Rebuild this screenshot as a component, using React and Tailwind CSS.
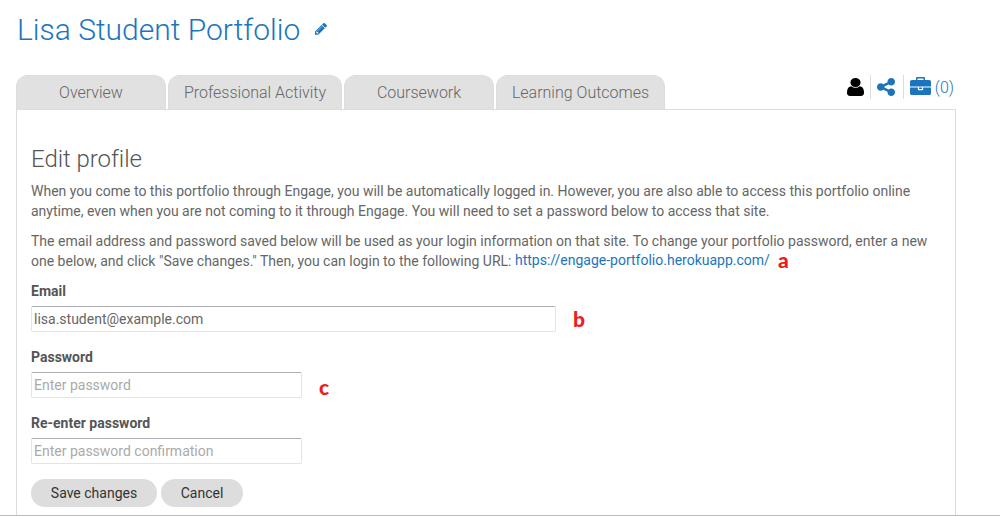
import React from 'react';

const tabs = [
  { label: 'Overview', size: 'w-[150px]' },
  { label: 'Professional Activity', size: 'w-[174px]' },
  { label: 'Coursework', size: 'w-[150px]' },
  { label: 'Learning Outcomes', size: 'w-[169px]' },
];

function PencilIcon() {
  return (
    <svg className="h-3 w-3" viewBox="128 150 1536 1536" fill="currentColor" aria-hidden="true">
      <path d="M491 1536l91-91-235-235-91 91v107h128v128h107zm523-928q0-22-22-22-10 0-17 7l-542 542q-7 7-7 17 0 22 22 22 10 0 17-7l542-542q7-7 7-17zm-54-192l416 416-832 832h-416v-416zm683 96q0 53-37 90l-166 166-416-416 166-165q36-38 90-38 53 0 91 38l235 234q37 39 37 91z" />
    </svg>
  );
}

function UserIcon() {
  return (
    <svg className="h-[18px] w-[17px]" viewBox="256 128 1280 1536" preserveAspectRatio="none" fill="currentColor" aria-hidden="true">
      <path d="M1536 1399q0 109-62.500 187t-150.500 78h-854q-88 0-150.500-78t-62.500-187q0-85 8.500-160.500t31.500-152 58.500-131 94-89 134.500-34.500q131 128 313 128t313-128q76 0 134.500 34.500t94 89 58.500 131 31.500 152 8.500 160.500zm-256-887q0 159-112.500 271.500t-271.500 112.500-271.500-112.500-112.500-271.500 112.500-271.500 271.500-112.500 271.500 112.500 112.500 271.500z" />
    </svg>
  );
}

function ShareIcon() {
  return (
    <svg className="h-[18px] w-[18px]" viewBox="128 128 1536 1536" fill="currentColor" aria-hidden="true">
      <path d="M1344 1024q133 0 226.500 93.500t93.500 226.500-93.500 226.500-226.500 93.500-226.500-93.500-93.500-226.500q0-12 2-34l-360-180q-92 86-218 86-133 0-226.500-93.500t-93.500-226.500 93.500-226.500 226.500-93.500q126 0 218 86l360-180q-2-22-2-34 0-133 93.500-226.500t226.500-93.500 226.500 93.500 93.500 226.500-93.500 226.500-226.500 93.500q-126 0-218-86l-360 180q2 22 2 34t-2 34l360 180q92-86 218-86z" />
    </svg>
  );
}

function BriefcaseIcon() {
  return (
    <svg className="h-[18px] w-[21px]" viewBox="0 0 1792 1536" fill="currentColor" aria-hidden="true">
      <path d="M640 256h512v-128h-512v128zm1152 640v480q0 66-47 113t-113 47h-1472q-66 0-113-47t-47-113v-480h672v160q0 26 19 45t45 19h320q26 0 45-19t19-45v-160h672zm-768 0v128h-256v-128h256zm768-480v384h-1792v-384q0-66 47-113t113-47h352v-160q0-40 28-68t68-28h576q40 0 68 28t28 68v160h352q66 0 113 47t47 113z" />
    </svg>
  );
}

function Marker({ children, className }) {
  return <span className={`inline-block font-['Lato',sans-serif] text-[21px] leading-5 font-black text-[#ed1c24] ${className}`}>{children}</span>;
}

function Field({ label, width, children, ...input }) {
  return (
    <div className="mb-[15px]">
      <label className="block h-[25px] text-[14px] leading-5 font-bold text-[#555]">{label}</label>
      <div className="flex h-[26px]">
        <input
          className={`block h-[26px] rounded-[2px] border border-[#e3e3e8] border-t-[#abadb3] bg-white px-[2px] text-[14px] text-[#666] outline-none placeholder:text-[#aaa] ${width}`}
          {...input}
        />
        {children}
      </div>
    </div>
  );
}

export default function App() {
  return (
    <div className="flex h-[516px] flex-col overflow-hidden border-b border-[#bbb] bg-white font-['Roboto',sans-serif] text-[#666]">
      <header className="flex h-[75px] shrink-0 items-start pt-[10px] pl-[17px] text-[#1c75bc]">
        <h1 className="w-[283px] text-[30px] leading-10 font-light whitespace-nowrap">Lisa Student Portfolio</h1>
        <button className="mt-[13px] ml-[15px]" aria-label="Edit title"><PencilIcon /></button>
      </header>
      <div className="ml-4 flex h-[34px] w-[940px] shrink-0 justify-between">
        <nav className="flex gap-[2px]">
          {tabs.map((tab) => (
            <a key={tab.label} className={`flex h-[34px] items-center justify-center rounded-t-[12px] border border-b-0 border-[#ddd] bg-[#e1e1e1] pt-px text-[16px] font-light whitespace-nowrap text-[#666] ${tab.size}`}>{tab.label}</a>
          ))}
        </nav>
        <div className="flex h-6 items-center pr-[2px] text-[#1c75bc]">
          <span className="mr-[6px] text-black"><UserIcon /></span>
          <span className="flex h-6 items-center border-l border-[#ddd] pr-2 pl-[6px]"><ShareIcon /></span>
          <span className="flex h-6 items-center gap-1 border-l border-[#ddd] pl-[6px]"><span className="-mt-[2px]"><BriefcaseIcon /></span><span className="pt-px text-[16px] font-light">(0)</span></span>
        </div>
      </div>
      <main className="ml-4 w-[940px] flex-1 border border-b-0 border-[#ddd] pt-[34px] pl-[14px]">
        <h2 className="text-[24px] leading-[30px] font-light tracking-[-0.05px] text-[#555]">Edit profile</h2>
        <p className="mt-[7px] text-[14px] leading-5 whitespace-nowrap">
          When you come to this portfolio through Engage, you will be automatically logged in. However, you are also able to access this portfolio online<br />
          anytime, even when you are not coming to it through Engage. You will need to set a password below to access that site.
        </p>
        <p className="mt-[10px] text-[14px] leading-5 whitespace-nowrap">
          The email address and password saved below will be used as your login information on that site. To change your portfolio password, enter a new
        </p>
        <div className="mb-[10px] flex h-5 text-[14px] leading-5 whitespace-nowrap">
          <p>one below, and click "Save changes." Then, you can login to the following URL:&nbsp;</p>
          <a className="-mt-px text-[#1c75bc]">https://engage-portfolio.herokuapp.com/</a>
          <Marker className="-mt-px ml-2">a</Marker>
        </div>
        <Field label="Email" width="w-[525px]" defaultValue="lisa.student@example.com"><Marker className="mt-[3px] ml-[17px]">b</Marker></Field>
        <Field label="Password" width="w-[271px]" type="password" placeholder="Enter password"><Marker className="mt-[5px] ml-[17px]">c</Marker></Field>
        <Field label="Re-enter password" width="w-[271px]" type="password" placeholder="Enter password confirmation" />
        <div className="flex gap-1 text-[14px] text-[#333]">
          <button className="h-7 w-[126px] rounded-full bg-[#ddd]">Save changes</button>
          <button className="h-7 w-[82px] rounded-full bg-[#ddd]">Cancel</button>
        </div>
      </main>
    </div>
  );
}
